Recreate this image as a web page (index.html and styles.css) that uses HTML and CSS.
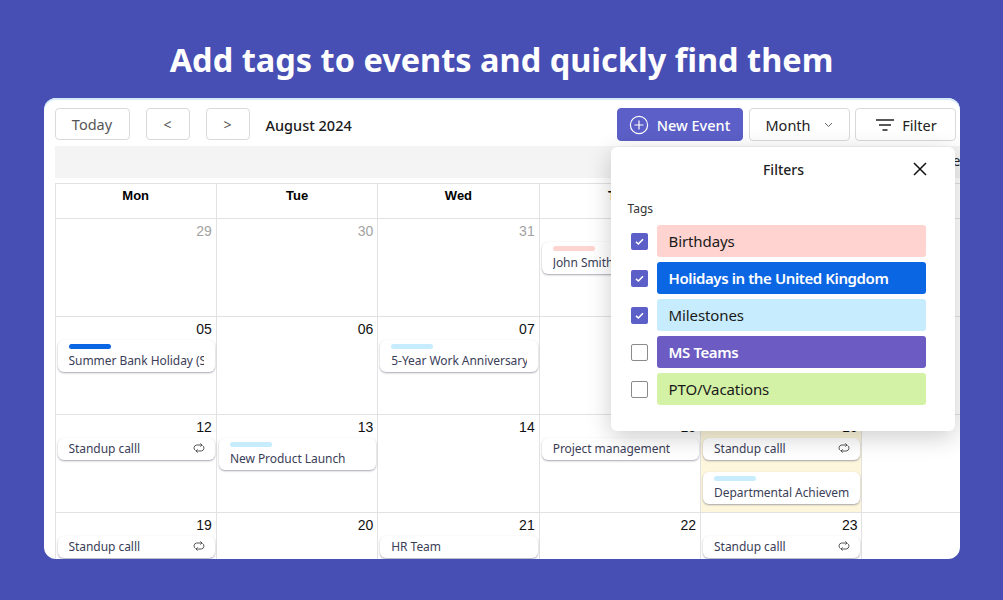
FILE: index.html
```html
<!DOCTYPE html>
<html lang="en">
<head>
<meta charset="UTF-8">
<title>Add tags to events</title>
<link rel="stylesheet" href="styles.css">
</head>
<body>
<svg class="defs" width="0" height="0">
  <symbol id="repeat" viewBox="0 0 12 12">
    <path d="M2.6 8.6A3 3 0 0 1 3.6 3H9M7.4 1.4 9 3 7.4 4.6M9.4 3.4A3 3 0 0 1 8.4 9H3M4.6 7.4 3 9l1.6 1.6" fill="none" stroke="currentColor" stroke-width="1"/>
  </symbol>
  <symbol id="tick" viewBox="0 0 17 17">
    <path d="M5 8.8 7.4 11 12 6.2" fill="none" stroke="#fff" stroke-width="1.6"/>
  </symbol>
</svg>

<h1 class="title">Add tags to events and quickly find them</h1>

<div class="card">
  <div class="toolbar">
    <button class="btn btn-today">Today</button>
    <button class="btn btn-nav">&lt;</button>
    <button class="btn btn-nav">&gt;</button>
    <span class="month-label">August 2024</span>
    <button class="btn btn-new">
      <svg width="20" height="20" viewBox="0 0 20 20"><circle cx="10" cy="10" r="8.6" fill="none" stroke="#fff" stroke-width="1.2"/><path d="M10 5.5v9M5.5 10h9" stroke="#fff" stroke-width="1.2"/></svg>
      New Event
    </button>
    <button class="btn btn-month">
      Month
      <svg width="9" height="6" viewBox="0 0 9 6"><path d="M1 1l3.5 3.5L8 1" fill="none" stroke="#666" stroke-width="1"/></svg>
    </button>
    <button class="btn btn-filter">
      <svg width="18" height="14" viewBox="0 0 18 14"><path d="M0 2h18M3 7h12M6.5 12h5" stroke="#222" stroke-width="1.5"/></svg>
      Filter
    </button>
  </div>

  <div class="allday"><span>e</span></div>

  <div class="grid">
    <div class="head">Mon</div>
    <div class="head">Tue</div>
    <div class="head">Wed</div>
    <div class="head">Thu</div>
    <div class="head">Fri</div>
    <div class="head">Sat</div>

    <div class="cell"><div class="date muted">29</div></div>
    <div class="cell"><div class="date muted">30</div></div>
    <div class="cell"><div class="date muted">31</div></div>
    <div class="cell"><div class="date">01</div>
      <div class="chip"><i class="tag pink"></i><span class="chip-text">John Smith</span></div>
    </div>
    <div class="cell"><div class="date">02</div></div>
    <div class="cell"><div class="date">03</div></div>

    <div class="cell"><div class="date">05</div>
      <div class="chip"><i class="tag blue"></i><span class="chip-text">Summer Bank Holiday (Substitute day)</span></div>
    </div>
    <div class="cell"><div class="date">06</div></div>
    <div class="cell"><div class="date">07</div>
      <div class="chip"><i class="tag sky"></i><span class="chip-text">5-Year Work Anniversary</span></div>
    </div>
    <div class="cell"><div class="date">08</div></div>
    <div class="cell"><div class="date">09</div></div>
    <div class="cell"><div class="date">10</div></div>

    <div class="cell"><div class="date">12</div>
      <div class="chip chip-row"><span class="chip-text">Standup calll</span><svg class="repeat"><use href="#repeat"/></svg></div>
    </div>
    <div class="cell"><div class="date">13</div>
      <div class="chip"><i class="tag sky"></i><span class="chip-text">New Product Launch</span></div>
    </div>
    <div class="cell"><div class="date">14</div></div>
    <div class="cell"><div class="date">15</div>
      <div class="chip chip-row"><span class="chip-text">Project management</span></div>
    </div>
    <div class="cell today"><div class="date">16</div>
      <div class="chip chip-row"><span class="chip-text">Standup calll</span><svg class="repeat"><use href="#repeat"/></svg></div>
      <div class="chip"><i class="tag sky"></i><span class="chip-text">Departmental Achievement</span></div>
    </div>
    <div class="cell"><div class="date">17</div></div>

    <div class="cell"><div class="date">19</div>
      <div class="chip chip-row"><span class="chip-text">Standup calll</span><svg class="repeat"><use href="#repeat"/></svg></div>
    </div>
    <div class="cell"><div class="date">20</div></div>
    <div class="cell"><div class="date">21</div>
      <div class="chip chip-row"><span class="chip-text">HR Team</span></div>
    </div>
    <div class="cell"><div class="date">22</div></div>
    <div class="cell"><div class="date">23</div>
      <div class="chip chip-row"><span class="chip-text">Standup calll</span><svg class="repeat"><use href="#repeat"/></svg></div>
    </div>
    <div class="cell"><div class="date">24</div></div>
  </div>

  <div class="popup">
    <div class="popup-head">
      <span>Filters</span>
      <svg class="close" width="14" height="14" viewBox="0 0 14 14"><path d="M1 1l12 12M13 1L1 13" stroke="#111" stroke-width="1.5"/></svg>
    </div>
    <div class="popup-label">Tags</div>
    <div class="tag-row"><span class="check on"><svg width="17" height="17"><use href="#tick"/></svg></span><span class="pill pill-pink">Birthdays</span></div>
    <div class="tag-row"><span class="check on"><svg width="17" height="17"><use href="#tick"/></svg></span><span class="pill pill-blue">Holidays in the United Kingdom</span></div>
    <div class="tag-row"><span class="check on"><svg width="17" height="17"><use href="#tick"/></svg></span><span class="pill pill-sky">Milestones</span></div>
    <div class="tag-row"><span class="check"></span><span class="pill pill-purple">MS Teams</span></div>
    <div class="tag-row"><span class="check"></span><span class="pill pill-green">PTO/Vacations</span></div>
  </div>
</div>
</body>
</html>
```

FILE: styles.css
```css
:root{
  --bg:#474eb4;--line:#e2e2e2;--accent:#5b5fc7;--chip-txt:#3b4058;
  --ui:"Noto Sans","Open Sans",sans-serif;--cal:"Liberation Sans",Arial,sans-serif}
html,body{height:100%}
body{margin:0;background:var(--bg);overflow:hidden;display:flex;flex-direction:column;align-items:center;font-family:var(--ui)}
.defs{position:absolute}
.title{margin:0;padding-top:37px;height:61px;line-height:46px;box-sizing:content-box;font-size:32.5px;font-weight:700;color:#fff;text-align:center}

.card{position:relative;width:916px;height:461px;box-sizing:border-box;padding:10px 0 0 11px;background:#fff;border-radius:12px;overflow:hidden;box-shadow:inset 0 2px 0 #d5e9f7}

/* toolbar */
.toolbar{display:flex;align-items:flex-start;height:33px}
.btn{height:32px;box-sizing:border-box;background:#fff;border:1px solid #d9d9d9;border-radius:4px;font-family:var(--ui);font-size:14.5px;color:#222;padding:0;display:flex;align-items:center;justify-content:center}
.btn-today{width:75px;color:#555}
.btn-nav{width:44px;margin-left:16px;color:#555;font-size:14px}
.btn-nav + .btn-nav{margin-left:16px}
.month-label{margin-left:16px;margin-right:auto;line-height:35px;font-size:14.5px;font-weight:500;color:#1a1a1a}
.btn-new{width:126px;height:33px;gap:8px;background:var(--accent);border-color:var(--accent);color:#fff;font-weight:500}
.btn-month{width:101px;height:33px;margin-left:6px;gap:13px}
.btn-filter{width:101px;height:33px;margin-left:5px;margin-right:4px;padding-left:3px;gap:8px}

.allday{height:32px;margin-top:5px;background:#f4f4f4;display:flex;justify-content:flex-end;font-size:14px;line-height:30px;color:#222}
.allday span{margin-right:-1px}

/* calendar */
.grid{display:grid;grid-template-columns:repeat(6,161.4px);grid-template-rows:35px repeat(4,98px);margin-top:5px;border-top:1px solid var(--line);border-left:1px solid var(--line);font-family:var(--cal)}
.head{border-right:1px solid var(--line);border-bottom:1px solid var(--line);text-align:center;font-size:13px;font-weight:700;line-height:24px;color:#000}
.cell{border-right:1px solid var(--line);border-bottom:1px solid var(--line);box-sizing:border-box;padding:4px 1px 0 2px;min-width:0}
.today{background:#fdf6dc}
.date{height:19px;padding-right:3px;text-align:right;font-size:14px;line-height:16px;color:#111}
.date.muted{color:#a3a3a3}
.chip{height:32px;box-sizing:border-box;padding:3px 11px 0;background:#fff;border-radius:6px;box-shadow:0 1px 2px rgba(60,60,90,.45);font-family:var(--ui);font-size:12px;letter-spacing:-.05px;color:var(--chip-txt);margin-bottom:12px}
.chip-row{height:22px;padding-top:0;padding-bottom:2px;display:flex;align-items:center;justify-content:space-between}
.chip-text{display:block;overflow:hidden;white-space:nowrap;line-height:17px}
.tag{display:block;width:42px;height:5px;border-radius:3px;margin:1px 0 3px}
.pink{background:#ffd3cf}
.blue{background:#0b66e4}
.sky{background:#c7ecfd}
.repeat{width:12px;height:12px;flex:none;color:#555;margin-right:-1px}

/* filter popup */
.popup{position:absolute;left:567px;top:49px;width:344px;height:284px;box-sizing:border-box;padding:0 29px 0 17px;background:#fff;border-radius:6px;box-shadow:0 6px 24px rgba(0,0,0,.2)}
.popup-head{position:relative;height:45px;line-height:46px;text-align:center;font-size:14px;font-weight:500;color:#222;margin-right:-14px}
.close{position:absolute;right:13px;top:15px}
.popup-label{margin-top:7px;height:26px;font-size:12px;line-height:20px;color:#333}
.tag-row{display:flex;align-items:center;gap:9px;margin-bottom:5px;padding-left:3px}
.check{width:17px;height:17px;box-sizing:border-box;border:1px solid #8a8a8a;border-radius:2px;background:#fff;flex:none;display:block}
.check.on{background:var(--accent);border:0}
.check svg{display:block}
.pill{flex:1;height:32px;line-height:32px;box-sizing:border-box;padding-left:12px;border-radius:3px;font-size:15px;letter-spacing:-.1px;color:#1a1a1a}
.pill-pink{background:#ffd3cf}
.pill-blue{background:#0b66e4;color:#fff;font-weight:600;letter-spacing:-.4px}
.pill-sky{background:#c7ecfd}
.pill-purple{background:#6b5bc2;color:#fff;font-weight:600;letter-spacing:-.4px}
.pill-green{background:#d4f2a6}
```
